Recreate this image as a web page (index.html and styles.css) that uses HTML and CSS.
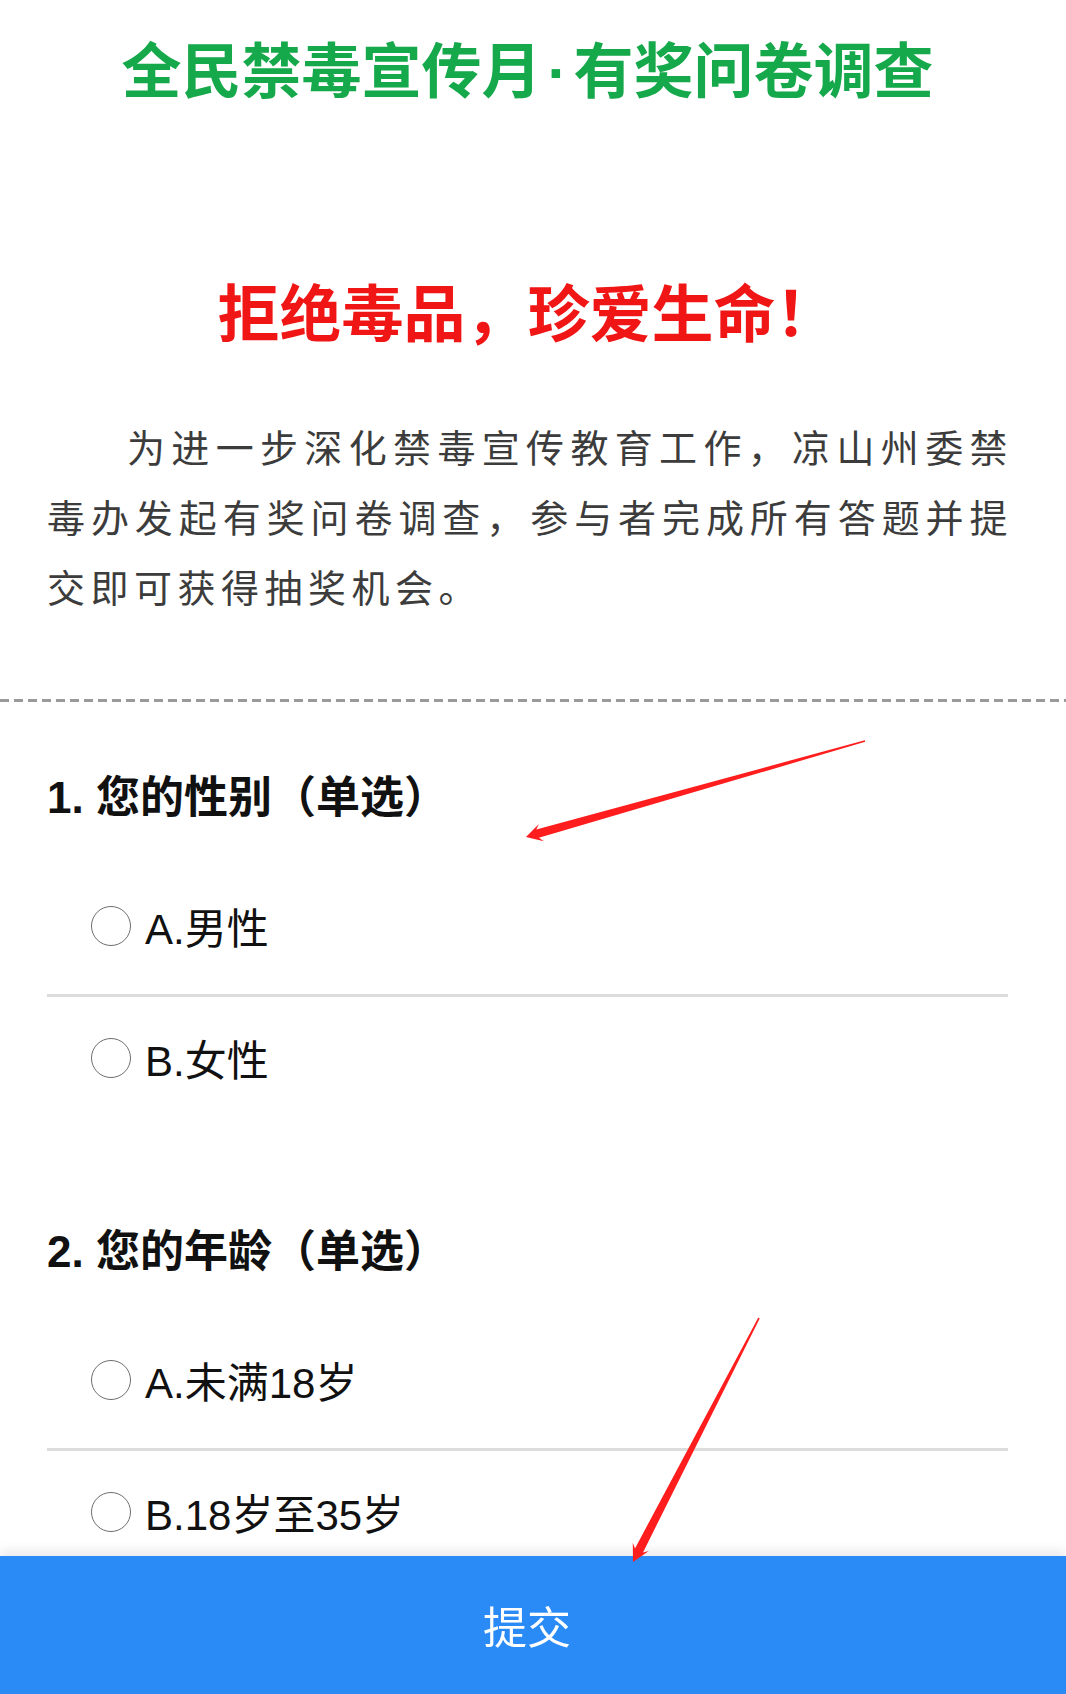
FILE: index.html
```html
<!DOCTYPE html>
<html lang="zh-CN">
<head>
<meta charset="utf-8">
<title>全民禁毒宣传月·有奖问卷调查</title>
<link rel="stylesheet" href="styles.css">
</head>
<body>
<div class="page">
  <h1 class="title">全民禁毒宣传月<span class="dot">·</span>有奖问卷调查</h1>
  <h2 class="slogan">拒绝毒品，珍爱生命！</h2>
  <p class="intro">为进一步深化禁毒宣传教育工作，凉山州委禁毒办发起有奖问卷调查，参与者完成所有答题并提交即可获得抽奖机会。</p>
</div>
<div class="dash"></div>
<div class="page">
  <section class="question">
    <div class="q-title">1. 您的性别（单选）</div>
    <div class="options">
      <label class="option"><span class="radio"></span><span class="opt-text">A.男性</span></label>
      <label class="option"><span class="radio"></span><span class="opt-text">B.女性</span></label>
    </div>
  </section>
  <section class="question">
    <div class="q-title">2. 您的年龄（单选）</div>
    <div class="options">
      <label class="option"><span class="radio"></span><span class="opt-text">A.未满18岁</span></label>
      <label class="option"><span class="radio"></span><span class="opt-text">B.18岁至35岁</span></label>
    </div>
  </section>
</div>
<div class="submit-bar"><span class="submit-text">提交</span></div>
<svg class="annot" width="1066" height="1694" viewBox="0 0 1066 1694" xmlns="http://www.w3.org/2000/svg">
  <polygon fill="#ff1d1d" points="526,837 543.9,841.3 538.9,837.8 865.2,741.8 864.8,740.2 536.3,829.6 538.9,823.9"/>
  <polygon fill="#ff1d1d" points="633,1562 648.8,1551 643,1552.4 759.7,1318.4 758.3,1317.6 635,1548.4 632.8,1542.8"/>
</svg>
</body>
</html>
```
FILE: styles.css
```css
html, body {
  margin: 0;
  padding: 0;
  background: #ffffff;
}

body {
  position: relative;
  font-family: "Noto Sans CJK SC", "Noto Sans", sans-serif;
  color: #111;
  overflow: hidden;
  height: 1694px;
}

.page {
  padding: 0 58px 0 47px;
}

.title {
  margin: 0;
  padding-top: 27px;
  font-size: 60px;
  line-height: 80px;
  font-weight: 700;
  text-align: center;
  color: #16a94b;
}

.title .dot {
  display: inline-block;
  padding: 0 6px;
  font-family: "Liberation Sans", sans-serif;
}

.slogan {
  margin: 157px 0 0;
  font-size: 62px;
  line-height: 80px;
  font-weight: 700;
  text-align: center;
  color: #f01616;
}

.intro {
  margin: 61px -5px 0 0;
  font-size: 38px;
  line-height: 70px;
  letter-spacing: 5.5px;
  text-indent: 80px;
  text-align: justify;
  color: #3c3c3c;
}

.dash {
  margin-top: 78px;
  height: 3px;
  background: repeating-linear-gradient(to right, #9a9a9a 0 9px, transparent 9px 14px);
}

.question {
  padding-top: 66px;
}

.question + .question {
  padding-top: 96px;
}

.q-title {
  font-family: "Liberation Sans", "Noto Sans CJK SC", sans-serif;
  font-size: 44px;
  line-height: 60px;
  font-weight: 700;
  color: #111;
}

.options {
  margin-top: 37px;
}

.option {
  display: flex;
  align-items: center;
  height: 121px;
  padding: 0 0 8px 44px;
}

.option + .option {
  border-top: 3px solid #dcdcdc;
}

.radio {
  width: 38px;
  height: 38px;
  border: 1.5px solid #6e6e6e;
  border-radius: 50%;
  flex: none;
  background: #fff;
}

.opt-text {
  margin-left: 14px;
  font-family: "Liberation Sans", "Noto Sans CJK SC", sans-serif;
  font-size: 42px;
  color: #111;
}

.submit-bar {
  position: fixed;
  left: 0;
  right: 0;
  bottom: 0;
  height: 138px;
  padding-right: 12px;
  display: flex;
  align-items: center;
  justify-content: center;
  background: #2a8af6;
  color: #fff;
  box-shadow: 0 -6px 10px rgba(0, 0, 0, 0.08);
  z-index: 10;
}

.submit-text {
  font-size: 44px;
}

.annot {
  position: absolute;
  left: 0;
  top: 0;
  z-index: 20;
  pointer-events: none;
}
```
